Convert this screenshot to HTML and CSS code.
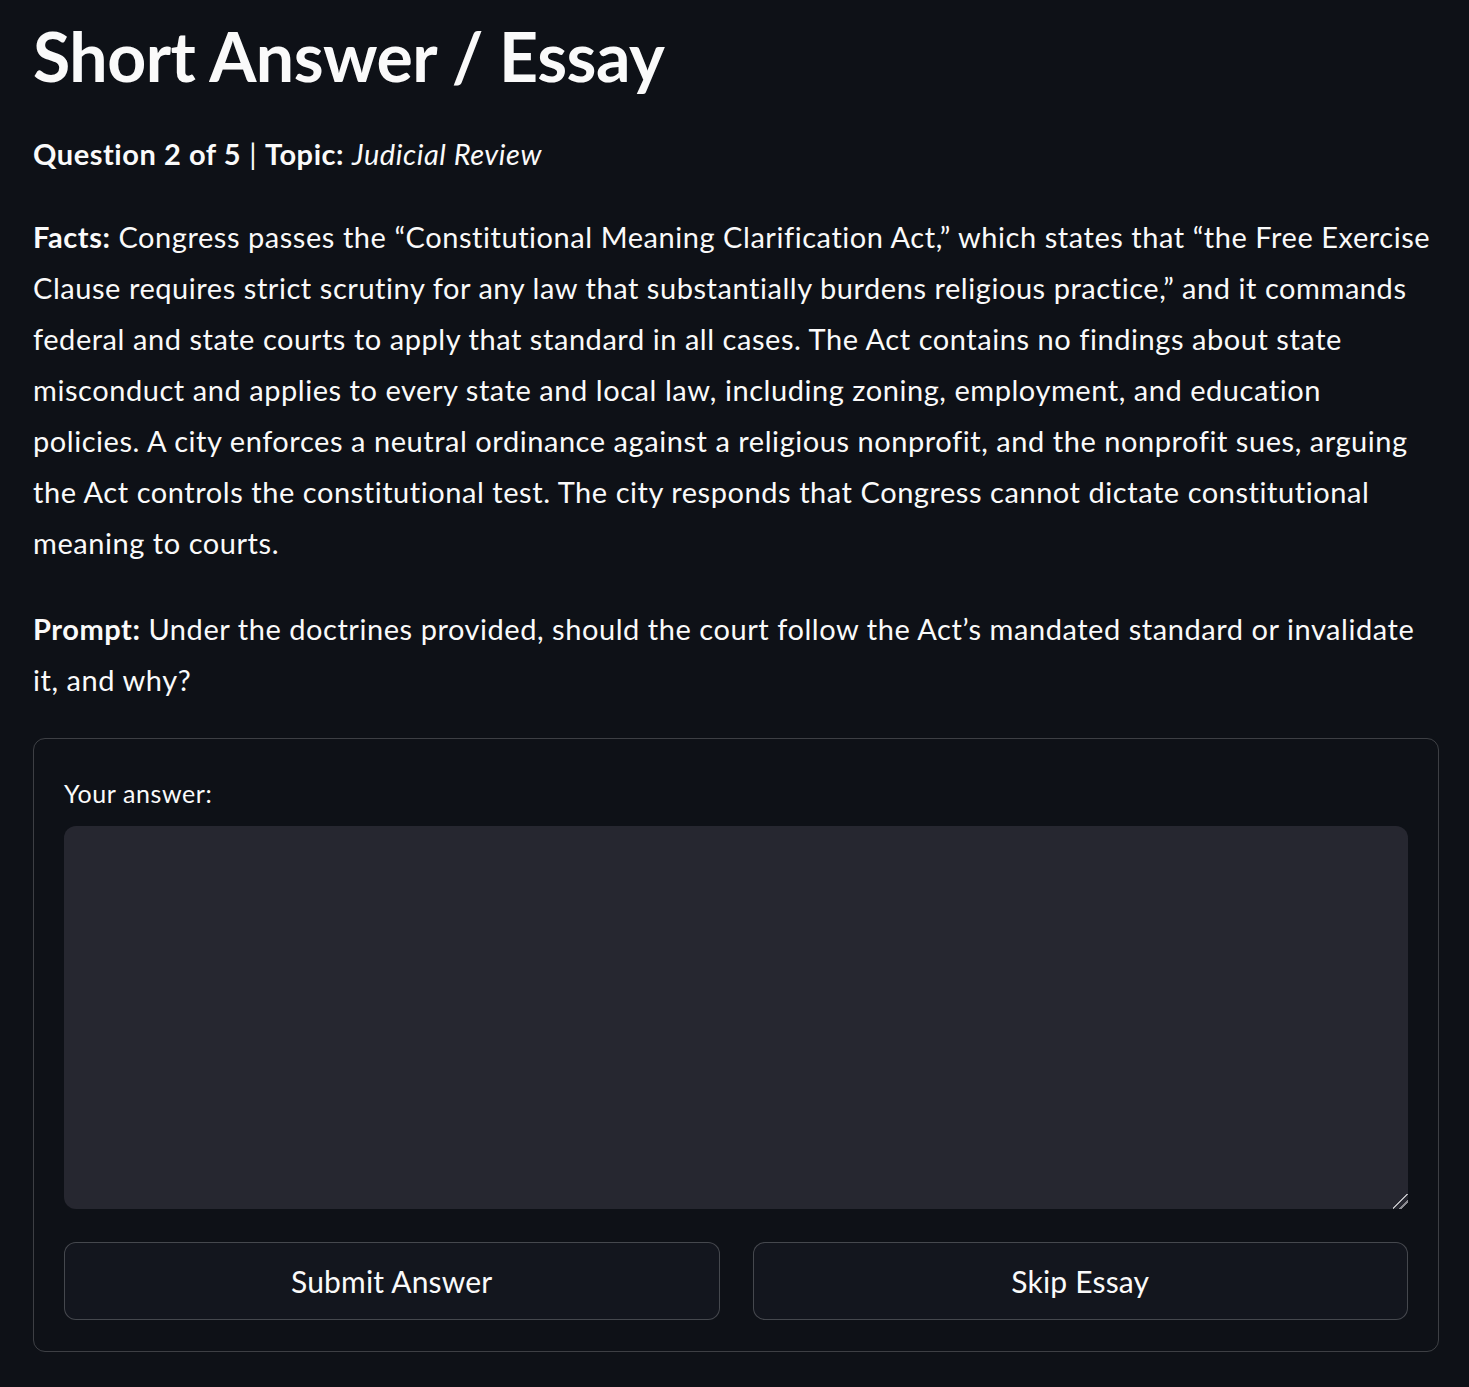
FILE: index.html
```html
<!DOCTYPE html>
<html lang="en">
<head>
<meta charset="utf-8">
<title>Short Answer / Essay</title>
<link rel="stylesheet" href="styles.css">
</head>
<body>
<main class="page">
  <h1 class="title">Short Answer / Essay</h1>
  <p class="meta"><strong>Question 2 of 5</strong> | <strong>Topic:</strong> <em>Judicial Review</em></p>
  <p class="para facts"><strong>Facts:</strong> Congress passes the “Constitutional Meaning Clarification Act,” which states that “the Free Exercise Clause requires strict scrutiny for any law that substantially burdens religious practice,” and it commands federal and state courts to apply that standard in all cases. The Act contains no findings about state misconduct and applies to every state and local law, including zoning, employment, and education policies. A city enforces a neutral ordinance against a religious nonprofit, and the nonprofit sues, arguing the Act controls the constitutional test. The city responds that Congress cannot dictate constitutional meaning to courts.</p>
  <p class="para prompt"><strong>Prompt:</strong> Under the doctrines provided, should the court follow the Act’s mandated standard or invalidate it, and why?</p>
  <form class="form">
    <label class="label" for="answer">Your answer:</label>
    <textarea id="answer" class="answer"></textarea>
    <div class="buttons">
      <button type="button" class="btn">Submit Answer</button>
      <button type="button" class="btn">Skip Essay</button>
    </div>
  </form>
</main>
</body>
</html>
```

FILE: styles.css
```css
html, body {
  margin: 0;
  padding: 0;
  background: #0e1117;
  color: #fafafa;
  color-scheme: dark;
}
body {
  font-family: Lato, "Open Sans", sans-serif;
}
.page {
  width: 1406px;
  padding: 0 30px 34px 33px;
}
.title {
  margin: 0;
  padding-top: 18px;
  font-size: 68px;
  font-weight: 700;
  line-height: 76px;
  letter-spacing: -0.5px;
}
.meta {
  margin: 40px 0 0;
  font-size: 29px;
  line-height: 40px;
  letter-spacing: 0.55px;
}
.para {
  margin: 37px 0 0;
  font-size: 29px;
  line-height: 51px;
  letter-spacing: 0.55px;
}
.facts {
  padding-right: 6px;
}
.prompt {
  margin-top: 35px;
}
.form {
  margin-top: 33px;
  border: 1px solid rgba(250, 250, 250, 0.2);
  border-radius: 12px;
  padding: 30px 30px 31px;
  display: flex;
  flex-direction: column;
}
.label {
  font-size: 25px;
  line-height: 32px;
  margin-top: 8px;
  letter-spacing: 0.6px;
}
.answer {
  margin-top: 17px;
  height: 383px;
  box-sizing: border-box;
  background: #262730;
  border: none;
  border-radius: 12px;
  resize: vertical;
  color: #fafafa;
  font: inherit;
  font-size: 28px;
  padding: 16px 20px;
  outline: none;
}
.answer::-webkit-resizer {
  background: linear-gradient(135deg,
    transparent 44%, #b8b8bc 44%, #b8b8bc 53%, transparent 53%,
    transparent 70%, #8a8a90 70%, #8a8a90 78%, transparent 78%);
}
.buttons {
  margin-top: 33px;
  display: grid;
  grid-template-columns: 1fr 1fr;
  gap: 33px;
}
.btn {
  height: 78px;
  box-sizing: border-box;
  background: #13161e;
  border: 1.5px solid rgba(250, 250, 250, 0.22);
  border-radius: 12px;
  color: #fafafa;
  font-family: inherit;
  font-size: 30px;
  letter-spacing: 0.2px;
  cursor: pointer;
}
```
